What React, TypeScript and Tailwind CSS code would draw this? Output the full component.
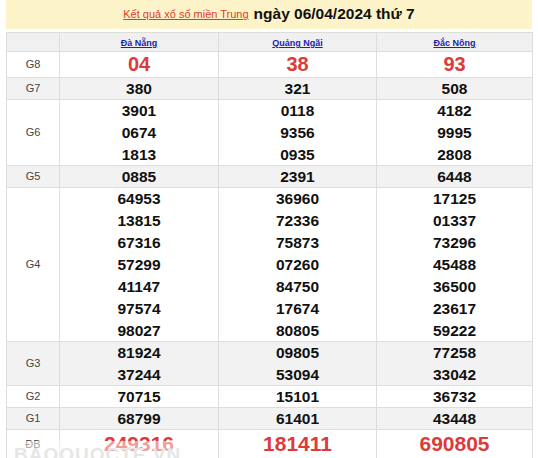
import React from "react";

type Row = {
	label: string;
	values: string[][];
	gray?: boolean;
	big?: "g8" | "db";
};

const provinces = ["Đà Nẵng", "Quảng Ngãi", "Đắc Nông"];

const rows: Row[] = [
	{ label: "G8", values: [["04"], ["38"], ["93"]], big: "g8" },
	{ label: "G7", values: [["380"], ["321"], ["508"]], gray: true },
	{
		label: "G6",
		values: [
			["3901", "0674", "1813"],
			["0118", "9356", "0935"],
			["4182", "9995", "2808"],
		],
	},
	{ label: "G5", values: [["0885"], ["2391"], ["6448"]], gray: true },
	{
		label: "G4",
		values: [
			["64953", "13815", "67316", "57299", "41147", "97574", "98027"],
			["36960", "72336", "75873", "07260", "84750", "17674", "80805"],
			["17125", "01337", "73296", "45488", "36500", "23617", "59222"],
		],
	},
	{
		label: "G3",
		values: [
			["81924", "37244"],
			["09805", "53094"],
			["77258", "33042"],
		],
		gray: true,
	},
	{ label: "G2", values: [["70715"], ["15101"], ["36732"]] },
	{ label: "G1", values: [["68799"], ["61401"], ["43448"]], gray: true },
	{ label: "ĐB", values: [["249316"], ["181411"], ["690805"]], big: "db" },
];

function Cell({ nums, big }: { nums: string[]; big?: "g8" | "db" }) {
	if (big === "g8") {
		return (
			<div className="h-[25px] leading-[25px] text-[20px] font-bold text-[#dd3b3b]">
				{nums[0]}
			</div>
		);
	}
	if (big === "db") {
		return (
			<div className="h-[28px] leading-[28px] text-[21px] font-bold text-[#dd3b3b]">
				{nums[0]}
			</div>
		);
	}
	// rows sit 22px apart incl. the border, so pull the last line up by 1px
	return (
		<div className="flex flex-col mb-[-1px]">
			{nums.map((n) => (
				<div key={n} className="h-[22px] leading-[22px] text-[15.5px] font-bold text-[#111]">
					{n}
				</div>
			))}
		</div>
	);
}

export default function App() {
	return (
		<div className="w-[538px] h-[458px] overflow-hidden bg-white font-['Liberation_Sans',Arial,sans-serif] relative">
			<div className="mx-[6px] h-[29px] bg-[#fdf3c8] flex items-center justify-center gap-[5px] pb-[1px]">
				<a href="#" className="text-[11px] text-[#e0392c] underline mt-[1px]">
					Kết quả xổ số miền Trung
				</a>
				<span className="text-[15.5px] font-bold text-[#111]">ngày 06/04/2024 thứ 7</span>
			</div>
			<table className="mx-[6px] mt-[3px] w-[526px] border-collapse table-fixed text-center">
				<colgroup>
					<col className="w-[53px]" />
					<col className="w-[159px]" />
					<col className="w-[158px]" />
					<col className="w-[156px]" />
				</colgroup>
				<thead>
					<tr className="bg-[#f0f0f0]">
						<th className="border border-[#dddddd] p-0 h-[16px]" />
						{provinces.map((p) => (
							<th key={p} className="border border-[#dddddd] p-0 h-[16px] leading-[15px]">
								<a href="#" className="text-[9px] font-bold text-[#2323a8] underline">
									{p}
								</a>
							</th>
						))}
					</tr>
				</thead>
				<tbody>
					{rows.map((r) => (
						<tr key={r.label} className={r.gray ? "bg-[#f2f2f2]" : "bg-white"}>
							<td className="border border-[#dddddd] p-0 text-[11px] text-[#444]">{r.label}</td>
							{r.values.map((v, i) => (
								<td key={i} className="border border-[#dddddd] p-0">
									<Cell nums={v} big={r.big} />
								</td>
							))}
						</tr>
					))}
				</tbody>
			</table>
			<div className="absolute left-[12px] top-[441px] px-[2px] bg-white/50 text-[19px] font-bold tracking-[1px] text-[#e6e6e6] pointer-events-none">
				BAOQUOCTE.VN
			</div>
		</div>
	);
}
